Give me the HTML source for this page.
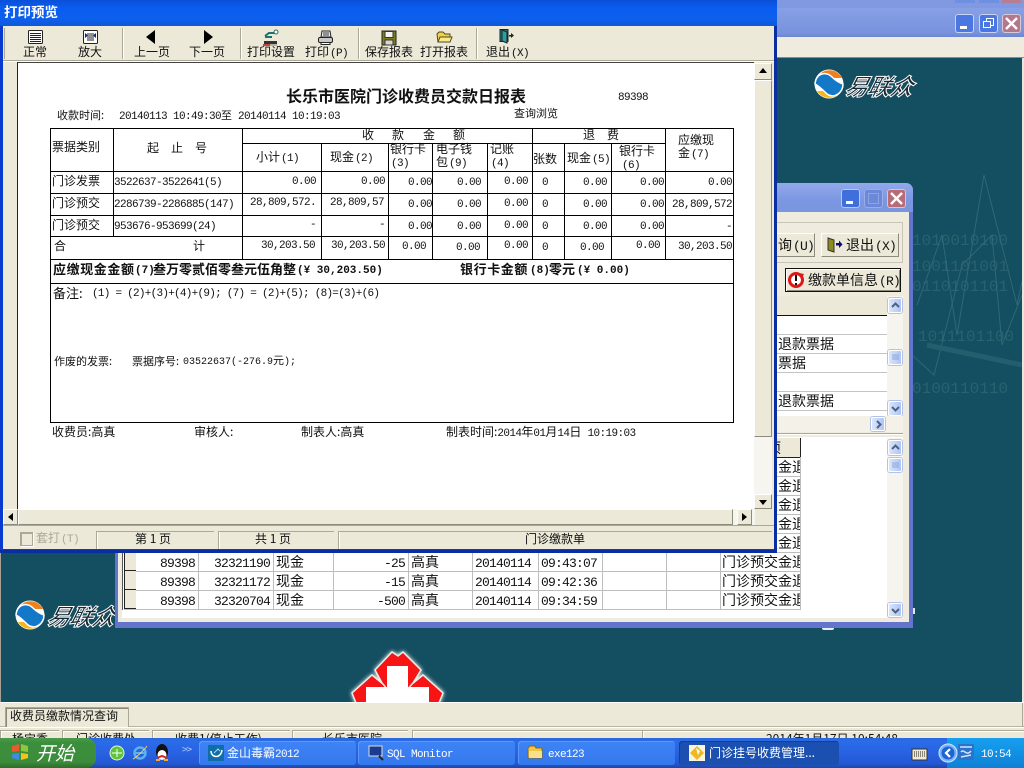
<!DOCTYPE html>
<html><head><meta charset="utf-8"><title>打印预览</title>
<style>
html,body{margin:0;padding:0}
body{width:1024px;height:768px;position:relative;overflow:hidden;background:#134f60;font:12px/12px "WenQuanYi Zen Hei","Noto Sans CJK SC",sans-serif;color:#111}
div,span,svg{position:absolute}
.t{position:absolute;white-space:nowrap;font-size:12px;line-height:12px}
.r{transform:translateX(-100%)}
.m{position:absolute;white-space:nowrap;font:11px/12px "Liberation Mono",monospace;letter-spacing:-.6px;margin-top:2px}
.m span{position:static;font:11px/12px "WenQuanYi Zen Hei","Noto Sans CJK SC",sans-serif;letter-spacing:0}
i{font:normal 11px/12px "Liberation Mono",monospace;letter-spacing:-.6px}
.b{position:absolute;background:#000}
.g{font-size:14px;line-height:14px}
.g i{font-size:13px;line-height:14px;letter-spacing:-.8px}
.raise{box-sizing:border-box;border:1px solid;border-color:#fff #8d8b7d #8d8b7d #fff;background:#ece9d8}
.sb{position:absolute;box-sizing:border-box;border:1px solid #fff;border-radius:2px;background:linear-gradient(90deg,#dbe6fb,#aec4f3);box-shadow:0 0 0 1px #b4c2e6}
.tb{position:absolute;top:741px;height:24px;width:157px;border-radius:3px;background:linear-gradient(#3f84f5,#3478ee);color:#fff;box-shadow:inset 1px 1px 0 #5c98f8}
.tb .t{color:#fff}
.rh{position:absolute;left:124px;width:11px;height:18px;background:#ece9d8;border:solid #222;border-width:0 0 1px 1px}
.p{position:absolute;top:531px;height:17px;border:solid #aca899;border-width:1px 0 0 1px;box-shadow:1px 0 0 #fff inset}
.s{position:absolute;top:730px;height:9px;border:solid #aca899;border-width:1px 0 0 1px;box-shadow:1px 1px 0 #fff inset}
.v{position:absolute;top:552px;height:57px;width:1px;background:#bdbdbd}
.lg{position:absolute;white-space:nowrap;font:italic bold 23px/26px "Noto Sans CJK SC",sans-serif;color:#1a2a35;-webkit-text-stroke:1px #fff;letter-spacing:-.5px}
</style></head><body>

<!-- desktop/back window -->
<div style="left:0;top:0;width:1024px;height:8px;background:#8199e0"></div>
<div style="left:0;top:8px;width:1024px;height:29px;background:linear-gradient(#87a0e6,#7892dd 85%,#6b85d2)"></div>
<div style="left:955px;top:0;width:20px;height:3px;background:#6f8fe0"></div>
<div style="left:979px;top:0;width:20px;height:3px;background:#6f8fe0"></div>
<div style="left:1002px;top:0;width:19px;height:3px;background:#b57e92"></div>
<div style="left:955px;top:14px;width:19px;height:19px;border-radius:3px;background:#4a78e0;box-shadow:0 0 0 1px #c8d4f4 inset"><div style="left:5px;top:12px;width:7px;height:3px;background:#fff"></div></div>
<div style="left:979px;top:14px;width:19px;height:19px;border-radius:3px;background:#4a78e0;box-shadow:0 0 0 1px #c8d4f4 inset"><div style="left:7px;top:4px;width:6px;height:6px;border:1px solid #fff"></div><div style="left:4px;top:7px;width:6px;height:5px;border:1px solid #fff;background:#4a78e0"></div></div>
<div style="left:1002px;top:14px;width:19px;height:19px;border-radius:3px;background:#b4788c;box-shadow:0 0 0 1px #d8c8d4 inset"><svg style="left:0;top:0" width="19" height="19"><path d="M4 4L15 15M15 4L4 15" stroke="#fff" stroke-width="2.4"/></svg></div>
<div style="left:0;top:37px;width:1024px;height:21px;background:#efebdf"></div>
<div style="left:0;top:57px;width:1024px;height:1px;background:#8a8d80"></div>
<div style="left:0;top:58px;width:1px;height:644px;background:#a99f94"></div>
<div style="left:1022px;top:58px;width:2px;height:644px;background:#e8e6dc"></div>

<!-- background decoration -->
<svg style="left:912px;top:175px" width="110" height="360" fill="none" stroke="#5d8a97" stroke-width="1" opacity=".4">
<path d="M5 130L30 60L45 160L72 0L105 130L120 60"/><path d="M0 180L22 200L50 90L80 60L90 170L110 120"/>
<path d="M15 170L110 190" stroke-width="5" stroke="#3f7584"/>
<g fill="#6f9aa6" stroke="none" font-family="Liberation Mono,monospace" font-size="16" opacity=".6"><text x="0" y="70">1010010100</text><text x="0" y="96">1001101001</text><text x="0" y="116">0110101101</text><text x="6" y="166">1011101100</text><text x="0" y="218">0100110110</text></g></svg>

<!-- logos -->
<svg style="left:814px;top:67px" width="30" height="34" viewBox="0 0 30 34"><circle cx="15" cy="17" r="14.5" fill="#fff"/><path d="M3 11A14 14 0 0 1 28 11Z" fill="#f0801c"/><path d="M3 24A14 14 0 0 0 27 24Z" fill="#f7b517"/><path d="M1 17C2 6 12 4 18 10C22 14 26 16 29 17C29 26 20 32 13 27C9 23 5 19 1 17Z" fill="#1478c8" stroke="#fff" stroke-width="1.5"/></svg>
<div class="lg" style="left:846px;top:72px;transform:skewX(-14deg)">易联众</div>
<svg style="left:15px;top:598px" width="30" height="34" viewBox="0 0 30 34"><circle cx="15" cy="17" r="14.5" fill="#fff"/><path d="M3 11A14 14 0 0 1 28 11Z" fill="#f0801c"/><path d="M3 24A14 14 0 0 0 27 24Z" fill="#f7b517"/><path d="M1 17C2 6 12 4 18 10C22 14 26 16 29 17C29 26 20 32 13 27C9 23 5 19 1 17Z" fill="#1478c8" stroke="#fff" stroke-width="1.5"/></svg>
<div class="lg" style="left:48px;top:602px;transform:skewX(-14deg)">易联众</div>

<!-- red cross -->
<svg style="left:340px;top:645px" width="116" height="57" viewBox="340 645 116 57"><g fill="#f81414" stroke="#e8efe8" stroke-width="1.500" style="filter:drop-shadow(0 0 2px #fff)"><path d="M375 670L392 652L398 656L403 652L421 670L413 683L408 690H387L382 683Z"/><path d="M372 675L383 684L388 690V703H356L352 693Z"/><path d="M423 675L412 684L407 690V703H439L443 693Z"/></g><path d="M387 666H408V687H429V702H366V687H387Z" fill="#fff"/></svg>

<!-- middle window -->
<div style="left:115px;top:183px;width:798px;height:445px;background:#6274cc;border-radius:7px 7px 0 0"></div>
<div style="left:115px;top:183px;width:798px;height:29px;background:linear-gradient(#92a9ea,#7b97e2 60%,#7a95dd);border-radius:7px 7px 0 0"></div>
<div style="left:118px;top:212px;width:791px;height:410px;background:#efebdf"></div>
<div style="left:841px;top:189px;width:19px;height:19px;border-radius:3px;background:#3e6fdc;box-shadow:0 0 0 1px #b8c8f0 inset"><div style="left:5px;top:12px;width:7px;height:3px;background:#fff"></div></div>
<div style="left:864px;top:189px;width:19px;height:19px;border-radius:3px;background:#6c88d8;box-shadow:0 0 0 1px #98aee8 inset"><div style="left:4px;top:4px;width:9px;height:9px;border:1px solid #8ea4e0"></div></div>
<div style="left:887px;top:189px;width:19px;height:19px;border-radius:3px;background:#b86c78;box-shadow:0 0 0 1px #dcc4cc inset"><svg style="left:0;top:0" width="19" height="19"><path d="M4 4L15 15M15 4L4 15" stroke="#fff" stroke-width="2.4"/></svg></div>
<div style="left:700px;top:222px;width:203px;height:41px;box-sizing:border-box;border:1px solid #c8c5b4;border-left:0"></div>
<div class="raise" style="left:700px;top:233px;width:115px;height:24px"></div>
<div class="t g" style="left:778px;top:238px">询<i style="margin-left:1px">(U)</i></div>
<div class="raise" style="left:821px;top:233px;width:78px;height:24px"></div>
<svg style="left:827px;top:237px" width="16" height="16"><path d="M1 1L7 3V15L1 13Z" fill="#8a8a1e" stroke="#333"/><path d="M9 6H12V3.5L15.5 7.500L12 11V8.500H9Z" fill="#0a0a70"/></svg>
<div class="t g" style="left:846px;top:238px">退出<i style="margin-left:1px">(X)</i></div>
<div style="left:785px;top:268px;width:114px;height:22px;border:1px solid #111;background:#ece9d8;box-shadow:inset 1px 1px 0 #fff,inset -1px -1px 0 #8d8b7d"></div>
<svg style="left:787px;top:271px" width="18" height="18"><circle cx="9" cy="9" r="6.500" fill="#fff" stroke="#e01616" stroke-width="3"/><path d="M9 4V10M9 12V14" stroke="#111" stroke-width="2"/><path d="M12 2L17 3L15 7Z" fill="#e01616"/></svg>
<div class="t g" style="left:808px;top:273px">缴款单信息<i style="margin-left:1px">(R)</i></div>

<!-- grid 1 -->
<div style="left:700px;top:296px;width:203px;height:136px;background:#fff"></div>
<div style="left:700px;top:296px;width:187px;height:19px;background:#ece9d8"></div>
<div style="left:700px;top:315px;width:187px;height:1px;background:#111"></div>
<div style="left:700px;top:334px;width:187px;height:1px;background:#c4c4c4"></div>
<div style="left:700px;top:353px;width:187px;height:1px;background:#c4c4c4"></div>
<div style="left:700px;top:372px;width:187px;height:1px;background:#c4c4c4"></div>
<div style="left:700px;top:391px;width:187px;height:1px;background:#c4c4c4"></div>
<div style="left:700px;top:410px;width:187px;height:1px;background:#c4c4c4"></div>
<div class="t g" style="left:778px;top:337px">退款票据</div>
<div class="t g" style="left:778px;top:356px">票据</div>
<div class="t g" style="left:778px;top:394px">退款票据</div>
<div style="left:887px;top:296px;width:16px;height:120px;background:#f6f4ee"></div>
<div class="sb" style="left:888px;top:298px;width:14px;height:15px"><svg style="left:0;top:0" width="13" height="13"><path d="M3 8L6.500 4.500L10 8" stroke="#4d6185" stroke-width="2" fill="none"/></svg></div>
<div class="sb" style="left:888px;top:350px;width:14px;height:15px"><svg style="left:0;top:0" width="13" height="13"><path d="M3 4H10M3 6H10M3 8H10" stroke="#8ea6d8"/></svg></div>
<div class="sb" style="left:888px;top:401px;width:14px;height:15px"><svg style="left:0;top:0" width="13" height="13"><path d="M3 5L6.500 8.500L10 5" stroke="#4d6185" stroke-width="2" fill="none"/></svg></div>
<div style="left:700px;top:416px;width:203px;height:16px;background:#f4f1e8"></div>
<div class="sb" style="left:871px;top:417px;width:14px;height:14px"><svg style="left:0;top:0" width="13" height="13"><path d="M5 3L8.500 6.500L5 10" stroke="#4d6185" stroke-width="2" fill="none"/></svg></div>
<div style="left:118px;top:433px;width:785px;height:1px;background:#aca899"></div>
<div style="left:118px;top:434px;width:785px;height:1px;background:#fff"></div>

<!-- grid 2 -->
<div style="left:122px;top:437px;width:781px;height:181px;background:#fff"></div>
<div style="left:122px;top:437px;width:1px;height:173px;background:#555"></div>
<div style="left:700px;top:438px;width:100px;height:19px;background:#ece9d8;border-right:1px solid #222;border-bottom:1px solid #222"></div>
<div class="t g" style="left:767px;top:441px">项</div>
<div style="left:124px;top:476px;width:676px;height:1px;background:#bdbdbd"></div>
<div style="left:124px;top:495px;width:676px;height:1px;background:#bdbdbd"></div>
<div style="left:124px;top:514px;width:676px;height:1px;background:#bdbdbd"></div>
<div style="left:124px;top:533px;width:676px;height:1px;background:#bdbdbd"></div>
<div style="left:124px;top:552px;width:676px;height:1px;background:#bdbdbd"></div>
<div style="left:124px;top:571px;width:676px;height:1px;background:#bdbdbd"></div>
<div style="left:124px;top:590px;width:676px;height:1px;background:#bdbdbd"></div>
<div style="left:124px;top:609px;width:676px;height:1px;background:#bdbdbd"></div>
<div class="v" style="left:198px"></div><div class="v" style="left:273px"></div><div class="v" style="left:333px"></div><div class="v" style="left:408px"></div><div class="v" style="left:472px"></div><div class="v" style="left:538px"></div><div class="v" style="left:602px"></div><div class="v" style="left:666px"></div><div class="v" style="left:720px"></div>
<div style="left:800px;top:457px;width:1px;height:153px;background:#bdbdbd"></div>
<div class="rh" style="top:552px"></div><div class="rh" style="top:571px"></div><div class="rh" style="top:590px"></div>
<div style="left:722px;top:457px;width:78px;height:152px;overflow:hidden">
<div class="t g" style="left:0;top:3px">门诊预交金退</div><div class="t g" style="left:0;top:22px">门诊预交金退</div><div class="t g" style="left:0;top:41px">门诊预交金退</div><div class="t g" style="left:0;top:60px">门诊预交金退</div><div class="t g" style="left:0;top:79px">门诊预交金退</div><div class="t g" style="left:0;top:98px">门诊预交金退</div><div class="t g" style="left:0;top:117px">门诊预交金退</div><div class="t g" style="left:0;top:136px">门诊预交金退</div></div>
<div class="t g" style="left:160px;top:555px"><i>89398</i></div><div class="t g" style="left:214px;top:555px"><i>32321190</i></div><div class="t g" style="left:276px;top:555px">现金</div><div class="t g r" style="left:405px;top:555px"><i>-25</i></div><div class="t g" style="left:411px;top:555px">高真</div><div class="t g" style="left:475px;top:555px"><i>20140114</i></div><div class="t g" style="left:541px;top:555px"><i>09:43:07</i></div>
<div class="t g" style="left:160px;top:574px"><i>89398</i></div><div class="t g" style="left:214px;top:574px"><i>32321172</i></div><div class="t g" style="left:276px;top:574px">现金</div><div class="t g r" style="left:405px;top:574px"><i>-15</i></div><div class="t g" style="left:411px;top:574px">高真</div><div class="t g" style="left:475px;top:574px"><i>20140114</i></div><div class="t g" style="left:541px;top:574px"><i>09:42:36</i></div>
<div class="t g" style="left:160px;top:593px"><i>89398</i></div><div class="t g" style="left:214px;top:593px"><i>32320704</i></div><div class="t g" style="left:276px;top:593px">现金</div><div class="t g r" style="left:405px;top:593px"><i>-500</i></div><div class="t g" style="left:411px;top:593px">高真</div><div class="t g" style="left:475px;top:593px"><i>20140114</i></div><div class="t g" style="left:541px;top:593px"><i>09:34:59</i></div>
<div style="left:887px;top:438px;width:16px;height:180px;background:#f6f4ee"></div>
<div class="sb" style="left:888px;top:440px;width:14px;height:15px"><svg style="left:0;top:0" width="13" height="13"><path d="M3 8L6.500 4.500L10 8" stroke="#4d6185" stroke-width="2" fill="none"/></svg></div>
<div class="sb" style="left:888px;top:458px;width:14px;height:14px"><svg style="left:0;top:0" width="13" height="13"><path d="M3 4H10M3 6H10M3 8H10" stroke="#8ea6d8"/></svg></div>
<div class="sb" style="left:888px;top:603px;width:14px;height:14px"><svg style="left:0;top:0" width="13" height="13"><path d="M3 5L6.500 8.500L10 5" stroke="#4d6185" stroke-width="2" fill="none"/></svg></div>
<div style="left:913px;top:608px;width:2px;height:6px;background:#dfe8ea"></div>
<div style="left:822px;top:628px;width:12px;height:2px;background:#e8eeee;border-radius:0 0 6px 6px"></div>

<!-- bottom status bars -->
<div style="left:0;top:702px;width:1024px;height:40px;background:#ece9d8"></div>
<div style="left:0;top:702px;width:1024px;height:1px;background:#fff"></div>
<div style="left:0;top:726px;width:1024px;height:1px;background:#b8b5a4"></div>
<div style="left:0;top:727px;width:1024px;height:1px;background:#fff"></div>
<div style="left:1022px;top:703px;width:1px;height:24px;background:#aca899"></div>
<div style="left:5px;top:707px;width:122px;height:19px;background:#ece9d8;border:1px solid #aca899;border-bottom:0;box-shadow:inset 1px 1px 0 #8a8778"></div>
<div style="left:128px;top:707px;width:1px;height:19px;background:#aca899"></div>
<div class="t" style="left:10px;top:710px">收费员缴款情况查询</div>
<div class="s" style="left:0;width:58px"></div><div class="s" style="left:62px;width:86px"></div><div class="s" style="left:152px;width:137px"></div><div class="s" style="left:292px;width:115px"></div><div class="s" style="left:412px;width:612px"></div><div class="s" style="left:642px;width:382px"></div>
<div class="t" style="left:12px;top:733px">杨宝秀</div><div class="t" style="left:76px;top:733px">门诊收费处</div><div class="t" style="left:175px;top:733px">收费1(停止工作)</div><div class="t" style="left:322px;top:733px">长乐市医院</div><div class="t" style="left:766px;top:733px">2014年1月17日 10:54:48</div>

<!-- front window -->
<div style="left:0;top:0;width:777px;height:553px;background:#0a3ad0;box-shadow:inset 0 -3px 0 #0a2ea0,inset -3px 0 0 #0a2ea0"></div>
<div style="left:0;top:0;width:777px;height:26px;background:linear-gradient(#0a50d8,#0a5cf0 30%,#0c60ee 70%,#0f58d8)"></div>
<div class="t" style="left:4px;top:5px;color:#fff;font-size:13.5px;line-height:13px;font-weight:bold">打印预览</div>
<div style="left:3px;top:26px;width:771px;height:523px;background:#ece9d8"></div>
<!-- toolbar separators -->
<div style="left:4px;top:28px;width:1px;height:31px;background:#aca899"></div>
<div style="left:122px;top:28px;width:1px;height:31px;background:#aca899"></div><div style="left:123px;top:28px;width:1px;height:31px;background:#fff"></div>
<div style="left:240px;top:28px;width:1px;height:31px;background:#aca899"></div><div style="left:241px;top:28px;width:1px;height:31px;background:#fff"></div>
<div style="left:358px;top:28px;width:1px;height:31px;background:#aca899"></div><div style="left:359px;top:28px;width:1px;height:31px;background:#fff"></div>
<div style="left:476px;top:28px;width:1px;height:31px;background:#aca899"></div><div style="left:477px;top:28px;width:1px;height:31px;background:#fff"></div>
<!-- toolbar icons -->
<svg style="left:27px;top:30px" width="17" height="15"><rect x="1.500" y=".5" width="14" height="13" rx="1" fill="#fff" stroke="#222"/><path d="M3 3.500H14M3 5.500H14M3 7.500H14M3 9.500H14M3 11.500H14" stroke="#222"/></svg>
<svg style="left:82px;top:30px" width="17" height="15"><rect x="1.500" y=".5" width="14" height="13" rx="1" fill="#fff" stroke="#222"/><path d="M5 4H12M5 6H12M5 8H12M5 10H12" stroke="#222"/><path d="M3 3L6 5.500L3 8ZM14 3L11 5.500L14 8Z" fill="#0a2a80"/></svg>
<svg style="left:145px;top:29px" width="12" height="16"><path d="M10 1V15L1 8Z" fill="#000"/></svg>
<svg style="left:202px;top:29px" width="12" height="16"><path d="M2 1V15L11 8Z" fill="#000"/></svg>
<svg style="left:262px;top:29px" width="18" height="18"><path d="M1 15H15V17H1Z" fill="#b8b0a0"/><path d="M2 12H15V15H2Z" fill="#333"/><path d="M3 7L7 4H14M3 8H10" stroke="#1f6f6a" stroke-width="2" fill="none"/><circle cx="14" cy="3" r="2" fill="#fff" stroke="#1f6f6a"/><path d="M1 15H8V17H1Z" fill="#c84040"/></svg>
<svg style="left:317px;top:30px" width="17" height="15"><path d="M5 1H13L14 7H4Z" fill="#eee" stroke="#222"/><path d="M6 3H12M6 5H12" stroke="#333"/><rect x="1.500" y="7.500" width="14" height="5" rx="1.500" fill="#c8c8c8" stroke="#222"/><path d="M4 12.500H13V14.500H4Z" fill="#fff" stroke="#222"/></svg>
<svg style="left:381px;top:30px" width="16" height="16"><rect x="1" y="1" width="14" height="14" fill="#7c7c1e" stroke="#222"/><rect x="4" y="1.500" width="8" height="6" fill="#f4f4f4" stroke="#333"/><rect x="4" y="10" width="8" height="5" fill="#d8d8d0" stroke="#333"/></svg>
<svg style="left:436px;top:31px" width="17" height="13"><path d="M1 3L3 1H7L9 3H14V11H2Z" fill="#f2d04e" stroke="#4d4a20"/><path d="M4 6H16L14 11H2Z" fill="#fbe88a" stroke="#4d4a20"/></svg>
<svg style="left:498px;top:28px" width="17" height="17"><rect x="2" y="1.500" width="8" height="12" fill="#1f7c7c" stroke="#222"/><path d="M4 2L9 4V15L4 13Z" fill="#27a0a0" stroke="#222"/><path d="M11 7H13V5L16 7.500L13 10V8.500H11Z" fill="#222"/></svg>
<!-- toolbar labels -->
<div class="t" style="left:23px;top:46px">正常</div>
<div class="t" style="left:78px;top:46px">放大</div>
<div class="t" style="left:134px;top:46px">上一页</div>
<div class="t" style="left:189px;top:46px">下一页</div>
<div class="t" style="left:247px;top:46px">打印设置</div>
<div class="t" style="left:305px;top:46px">打印<i style="margin-left:1px">(P)</i></div>
<div class="t" style="left:365px;top:46px">保存报表</div>
<div class="t" style="left:420px;top:46px">打开报表</div>
<div class="t" style="left:486px;top:46px">退出<i style="margin-left:1px">(X)</i></div>
<div style="left:3px;top:60px;width:771px;height:1px;background:#aca899"></div>
<div style="left:3px;top:61px;width:771px;height:1px;background:#fff"></div>
<!-- preview -->
<div style="left:17px;top:62px;width:737px;height:1px;background:#444"></div>
<div style="left:17px;top:62px;width:1px;height:447px;background:#222"></div>
<div style="left:18px;top:63px;width:736px;height:446px;background:#fff"></div>

<!-- scrollbars -->
<div style="left:754px;top:63px;width:18px;height:446px;background:#f6f5ef"></div>
<div class="raise" style="left:754px;top:63px;width:18px;height:17px"><svg style="left:0;top:0" width="16" height="15"><path d="M8 4L12 9H4Z" fill="#000"/></svg></div>
<div class="raise" style="left:754px;top:80px;width:18px;height:357px"></div>
<div class="raise" style="left:754px;top:494px;width:18px;height:15px"><svg style="left:0;top:0" width="16" height="13"><path d="M8 10L12 5H4Z" fill="#000"/></svg></div>
<div style="left:3px;top:509px;width:752px;height:16px;background:#f6f5ef"></div>
<div class="raise" style="left:3px;top:509px;width:15px;height:16px"><svg style="left:0;top:0" width="13" height="14"><path d="M4 7L9 3V11Z" fill="#000"/></svg></div>
<div class="raise" style="left:18px;top:509px;width:715px;height:16px"></div>
<div class="raise" style="left:737px;top:509px;width:15px;height:16px"><svg style="left:0;top:0" width="13" height="14"><path d="M9 7L4 3V11Z" fill="#000"/></svg></div>
<div style="left:3px;top:525px;width:771px;height:1px;background:#aca899"></div>
<!-- status -->
<div style="left:20px;top:532px;width:10px;height:11px;border:1px solid #aca899;border-width:2px 1px 1px 2px;background:#ece9d8;box-shadow:1px 1px 0 #fff"></div>
<div class="t" style="left:36px;top:532px;color:#aca899">套打<i style="margin-left:1px">(T)</i></div>
<div class="p" style="left:96px;width:117px"></div><div class="p" style="left:218px;width:115px"></div><div class="p" style="left:338px;width:433px"></div>
<div class="t" style="left:135px;top:533px">第 1 页</div><div class="t" style="left:255px;top:533px">共 1 页</div><div class="t" style="left:525px;top:533px">门诊缴款单</div>

<!-- report -->
<div class="t" style="left:286px;top:87px;font-size:16px;line-height:16px;font-weight:bold">长乐市医院门诊收费员交款日报表</div>
<div class="m" style="left:618px;top:90px">89398</div>
<div class="t" style="left:57px;top:109px;font-size:11px">收款时间:</div>
<div class="m" style="left:119px;top:107px">20140113 10:49:30<span>至</span> 20140114 10:19:03</div>
<div class="t" style="left:514px;top:107px;font-size:11px">查询浏览</div>
<!-- table lines -->
<div class="b" style="left:50px;top:128px;width:684px;height:1px"></div>
<div class="b" style="left:242px;top:143px;width:491px;height:1px"></div><div style="left:666px;top:143px;width:67px;height:1px;background:#fff"></div>
<div class="b" style="left:50px;top:171px;width:684px;height:1px"></div>
<div class="b" style="left:50px;top:193px;width:684px;height:1px"></div>
<div class="b" style="left:50px;top:215px;width:684px;height:1px"></div>
<div class="b" style="left:50px;top:236px;width:684px;height:1px"></div>
<div class="b" style="left:50px;top:259px;width:684px;height:1px"></div>
<div class="b" style="left:50px;top:283px;width:684px;height:1px"></div>
<div class="b" style="left:50px;top:422px;width:684px;height:1px"></div>
<div class="b" style="left:50px;top:128px;width:1px;height:295px"></div>
<div class="b" style="left:733px;top:128px;width:1px;height:295px"></div>
<div class="b" style="left:113px;top:128px;width:1px;height:108px"></div>
<div class="b" style="left:242px;top:128px;width:1px;height:131px"></div>
<div class="b" style="left:321px;top:143px;width:1px;height:116px"></div>
<div class="b" style="left:388px;top:143px;width:1px;height:116px"></div>
<div class="b" style="left:432px;top:143px;width:1px;height:116px"></div>
<div class="b" style="left:487px;top:143px;width:1px;height:116px"></div>
<div class="b" style="left:532px;top:128px;width:1px;height:131px"></div>
<div class="b" style="left:564px;top:143px;width:1px;height:116px"></div>
<div class="b" style="left:611px;top:143px;width:1px;height:116px"></div>
<div class="b" style="left:665px;top:128px;width:1px;height:131px"></div>
<!-- headers -->
<div class="t" style="left:52px;top:141px">票据类别</div>
<div class="t" style="left:147px;top:142px">起</div><div class="t" style="left:171px;top:142px">止</div><div class="t" style="left:195px;top:142px">号</div>
<div class="t" style="left:362px;top:129px">收</div><div class="t" style="left:392px;top:129px">款</div><div class="t" style="left:423px;top:129px">金</div><div class="t" style="left:453px;top:129px">额</div>
<div class="t" style="left:256px;top:151px">小计<i style="margin-left:1px">(1)</i></div>
<div class="t" style="left:330px;top:151px">现金<i style="margin-left:1px">(2)</i></div>
<div class="t" style="left:390px;top:143px">银行卡</div><div class="t" style="left:391px;top:156px"><i>(3)</i></div>
<div class="t" style="left:436px;top:143px">电子钱</div><div class="t" style="left:436px;top:156px">包<i style="margin-left:1px">(9)</i></div>
<div class="t" style="left:490px;top:143px">记账</div><div class="t" style="left:491px;top:156px"><i>(4)</i></div>
<div class="t" style="left:583px;top:129px">退</div><div class="t" style="left:607px;top:129px">费</div>
<div class="t" style="left:533px;top:153px">张数</div>
<div class="t" style="left:567px;top:152px">现金<i style="margin-left:1px">(5)</i></div>
<div class="t" style="left:619px;top:145px">银行卡</div><div class="t" style="left:622px;top:158px"><i>(6)</i></div>
<div class="t" style="left:678px;top:134px">应缴现</div><div class="t" style="left:678px;top:147px">金<i style="margin-left:1px">(7)</i></div>
<!-- rows -->
<div class="t" style="left:52px;top:175px">门诊发票</div><div class="t" style="left:52px;top:197px">门诊预交</div><div class="t" style="left:52px;top:219px">门诊预交</div>
<div class="t" style="left:54px;top:240px">合</div><div class="t" style="left:193px;top:240px">计</div>
<div class="m" style="left:114px;top:175px">3522637-3522641(5)</div>
<div class="m" style="left:114px;top:197px">2286739-2286885(147)</div>
<div class="m" style="left:114px;top:219px">953676-953699(24)</div>
<div class="m r" style="left:316px;top:174px">0.00</div><div class="m" style="left:250px;top:195px">28,809,572.</div><div class="m r" style="left:316px;top:217px">-</div><div class="m r" style="left:315px;top:238px">30,203.50</div>
<div class="m r" style="left:385px;top:174px">0.00</div><div class="m r" style="left:384px;top:195px">28,809,57</div><div class="m r" style="left:385px;top:217px">-</div><div class="m r" style="left:385px;top:238px">30,203.50</div>
<div class="m r" style="left:432px;top:175px">0.00</div><div class="m r" style="left:432px;top:197px">0.00</div><div class="m r" style="left:432px;top:219px">0.00</div><div class="m r" style="left:426px;top:239px">0.00</div>
<div class="m r" style="left:481px;top:175px">0.00</div><div class="m r" style="left:481px;top:197px">0.00</div><div class="m r" style="left:481px;top:219px">0.00</div><div class="m r" style="left:480px;top:240px">0.00</div>
<div class="m r" style="left:528px;top:174px">0.00</div><div class="m r" style="left:528px;top:196px">0.00</div><div class="m r" style="left:528px;top:218px">0.00</div><div class="m r" style="left:528px;top:238px">0.00</div>
<div class="m" style="left:542px;top:175px">0</div><div class="m" style="left:542px;top:197px">0</div><div class="m" style="left:542px;top:219px">0</div><div class="m" style="left:542px;top:240px">0</div>
<div class="m r" style="left:607px;top:175px">0.00</div><div class="m r" style="left:607px;top:197px">0.00</div><div class="m r" style="left:607px;top:219px">0.00</div><div class="m r" style="left:604px;top:240px">0.00</div>
<div class="m r" style="left:664px;top:175px">0.00</div><div class="m r" style="left:664px;top:197px">0.00</div><div class="m r" style="left:664px;top:219px">0.00</div><div class="m r" style="left:660px;top:238px">0.00</div>
<div class="m r" style="left:732px;top:175px">0.00</div><div class="m r" style="left:732px;top:197px">28,809,572</div><div class="m r" style="left:732px;top:219px">-</div><div class="m r" style="left:732px;top:239px">30,203.50</div>
<!-- bold row -->
<div class="t" style="left:53px;top:263px;font-size:13px;font-weight:bold;letter-spacing:.6px">应缴现金金额</div>
<div class="m" style="left:135px;top:263px;font-weight:bold;letter-spacing:0">(7)</div>
<div class="t" style="left:153px;top:263px;font-size:13px;font-weight:bold">叁万零贰佰零叁元伍角整</div>
<div class="m" style="left:297px;top:263px;font-weight:bold;letter-spacing:0">(¥ 30,203.50)</div>
<div class="t" style="left:460px;top:263px;font-size:13px;font-weight:bold;letter-spacing:.6px">银行卡金额</div>
<div class="m" style="left:530px;top:263px;font-weight:bold;letter-spacing:0">(8)</div>
<div class="t" style="left:549px;top:263px;font-size:13px;font-weight:bold">零元</div>
<div class="m" style="left:577px;top:263px;font-weight:bold;letter-spacing:0">(¥ 0.00)</div>
<!-- notes -->
<div class="t" style="left:53px;top:287px;font-size:13px">备注:</div>
<div class="m" style="left:92px;top:286px;letter-spacing:-.74px">(1) = (2)+(3)+(4)+(9); (7) = (2)+(5); (8)=(3)+(6)</div>
<div class="t" style="left:54px;top:355px;font-size:11px">作废的发票:</div>
<div class="t" style="left:132px;top:355px;font-size:11px">票据序号:</div>
<div class="m" style="left:183px;top:352px;font-size:10px;letter-spacing:0">03522637(-276.9<span>元</span>);</div>
<!-- footer -->
<div class="t" style="left:52px;top:426px">收费员:高真</div>
<div class="t" style="left:194px;top:426px">审核人:</div>
<div class="t" style="left:301px;top:426px">制表人:高真</div>
<div class="t" style="left:446px;top:426px">制表时间:<i>2014</i>年<i>01</i>月<i>14</i>日<i> 10:19:03</i></div>

<!-- taskbar -->
<div style="left:0;top:738px;width:1024px;height:30px;background:linear-gradient(#2a68d8,#2a6cea 12%,#2860e0 55%,#2458d4 85%,#1c46a8)"></div>
<div style="left:0;top:738px;width:96px;height:30px;border-radius:0 10px 10px 0;background:linear-gradient(#4d9a4d,#3b8f3b 15%,#3c8c3c 80%,#2a6e2a)"></div>
<svg style="left:10px;top:742px" width="20" height="20"><path d="M2 4L9 2V9L2 10Z" fill="#e85c2c"/><path d="M11 2L18 4V10L11 9Z" fill="#8ec63f"/><path d="M2 12L9 11V18L2 16Z" fill="#3a8fe0"/><path d="M11 11L18 12V16L11 18Z" fill="#f6c21c"/></svg>
<div class="t" style="left:36px;top:743px;color:#fff;font-size:19px;line-height:20px;font-style:italic">开始</div>
<svg style="left:109px;top:744px" width="16" height="17"><circle cx="8" cy="9" r="7" fill="#5fc43c" stroke="#e8f4d8"/><path d="M3 9H13M8 5V13" stroke="#fff"/></svg>
<svg style="left:131px;top:744px" width="18" height="17"><circle cx="9" cy="9" r="5.500" fill="none" stroke="#5cb0f0" stroke-width="2.500"/><path d="M4 9H14" stroke="#5cb0f0" stroke-width="2"/><path d="M2 15C6 13 13 6 16 2" stroke="#f0d060" fill="none"/></svg>
<svg style="left:154px;top:743px" width="16" height="19"><ellipse cx="8" cy="9" rx="6" ry="8" fill="#111"/><ellipse cx="8" cy="12" rx="4.500" ry="5" fill="#fff"/><path d="M3 15L8 13L13 15" stroke="#e02020" stroke-width="2" fill="none"/><path d="M2 17H6M10 17H14" stroke="#f0b020" stroke-width="2"/></svg>
<div class="t" style="left:182px;top:743px;color:#bcd4f8;font-size:10px;letter-spacing:-1px">&gt;&gt;</div>

<div class="tb" style="left:199px"><svg style="left:9px;top:4px" width="16" height="16"><rect width="16" height="16" fill="#0f6ea8"/><path d="M3 6C3 13 13 14 14 5" stroke="#fff" stroke-width="1.500" fill="none"/><path d="M6 8L10 4L12 6" stroke="#9ee0f0" fill="none"/></svg><div class="t" style="left:28px;top:6px">金山毒霸<i>2012</i></div></div>
<div class="tb" style="left:358px"><svg style="left:10px;top:4px" width="16" height="16"><rect x="1" y="1" width="13" height="10" fill="#1c3a90" stroke="#ddd"/><path d="M11 11L15 15" stroke="#222" stroke-width="2"/></svg><div class="m" style="left:29px;top:6px;color:#fff">SQL Monitor</div></div>
<div class="tb" style="left:518px"><svg style="left:9px;top:4px" width="16" height="15"><path d="M1 3L3 1H8L9 3H15V13H1Z" fill="#f0c846" stroke="#806a20"/><path d="M2 6H15V13H2Z" fill="#f8e088"/></svg><div class="m" style="left:30px;top:6px;color:#fff">exe123</div></div>
<div class="tb" style="left:679px;width:160px;background:#1c50b0;box-shadow:inset 1px 1px 0 #143e90"><svg style="left:10px;top:4px" width="16" height="16"><rect width="16" height="16" fill="#f8f4e0"/><path d="M8 1L15 8L8 15L1 8Z" fill="#f0b820"/><path d="M7 3L11 6L9 10Z" fill="#fff"/></svg><div class="t" style="left:30px;top:6px">门诊挂号收费管理...</div></div>
<div style="left:947px;top:738px;width:77px;height:30px;background:linear-gradient(#18a0f0,#1290e4 50%,#0f80d4)"></div>
<svg style="left:911px;top:746px" width="18" height="16"><rect x="1" y="3" width="15" height="11" fill="#f0ead0" stroke="#333"/><path d="M3 6H14M3 8H14M3 10H14" stroke="#222" stroke-dasharray="1 1"/></svg>
<svg style="left:938px;top:743px" width="20" height="20"><circle cx="10" cy="10" r="9" fill="#7ab4f8" stroke="#cfe4fc"/><circle cx="10" cy="10" r="6.500" fill="#1f64d4"/><path d="M12 6L8 10L12 14" stroke="#fff" stroke-width="2.200" fill="none"/></svg>
<svg style="left:958px;top:744px" width="17" height="17"><rect width="16" height="16" fill="#2a72cc"/><path d="M2 3H14M3 8C6 4 8 13 13 7M3 13L13 11" stroke="#cfe4ff" stroke-width="1.500" fill="none"/></svg>
<div class="m" style="left:981px;top:747px;color:#fff">10:54</div>
</body></html>
